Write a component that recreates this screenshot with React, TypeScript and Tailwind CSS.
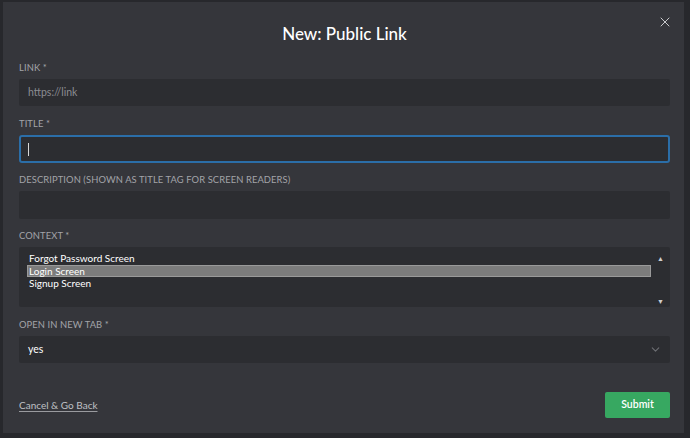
import { X, ChevronDown } from 'lucide-react';

const font = { fontFamily: 'Lato, "Open Sans", sans-serif' };

function Label({ children }: { children: React.ReactNode }) {
  return (
    <div className="text-[9.4px] leading-[12px] tracking-[0.01em] uppercase text-[#a3a4a9] mb-[5px]">
      {children}
    </div>
  );
}

export default function App() {
  const options = ['Forgot Password Screen', 'Login Screen', 'Signup Screen'];

  return (
    <div className="w-[690px] h-[438px] bg-[#27282c] overflow-hidden" style={font}>
      <div className="ml-[3px] mt-[2px] w-[681px] h-[431px] bg-[#35363b] relative pl-[16px] pr-[14px]">
        {/* header */}
        <div className="h-[60px] flex items-center justify-center pt-[4px]">
          <h2 className="text-[17px] text-white font-medium">New: Public Link</h2>
        </div>
        <button className="absolute right-[11px] top-[12px] text-[#c9cacd]">
          <X size={16} strokeWidth={1.5} />
        </button>

        {/* link */}
        <Label>Link *</Label>
        <div className="h-[27px] bg-[#2c2d31] rounded-[2px] flex items-center px-[9px] text-[10.5px] text-[#8b8c91]">
          https://link
        </div>

        {/* title */}
        <div className="mt-[12px]">
          <Label>Title *</Label>
          <div className="h-[28px] bg-[#2c2d31] rounded-[3px] border-2 border-[#2b6ea8] flex items-center px-[7px]">
            <span className="w-px h-[13px] bg-[#d8d8d8]" />
          </div>
        </div>

        {/* description */}
        <div className="mt-[11px]">
          <Label>Description (shown as title tag for screen readers)</Label>
          <div className="h-[28px] bg-[#2c2d31] rounded-[2px]" />
        </div>

        {/* context */}
        <div className="mt-[11px]">
          <Label>Context *</Label>
          <div className="h-[60px] bg-[#2c2d31] rounded-[2px] flex pl-[8px] pt-[5px]">
            <div className="flex-1 flex flex-col text-[10px] leading-[12.5px] text-white">
              {options.map((o) => (
                <div
                  key={o}
                  className={
                    o === 'Login Screen'
                      ? 'bg-[#7c7c7c] border border-[#9a9a9a] px-px leading-[10.5px]'
                      : 'px-[2px]'
                  }
                >
                  {o}
                </div>
              ))}
            </div>
            <div className="w-[19px] flex flex-col justify-between items-center py-[1px] text-[#cfcfcf] text-[7px]">
              <span>▲</span>
              <span>▼</span>
            </div>
          </div>
        </div>

        {/* open in new tab */}
        <div className="mt-[12px]">
          <Label>Open in new tab *</Label>
          <div className="h-[27px] bg-[#2c2d31] rounded-[2px] flex items-center justify-between pl-[9px] pr-[8px] text-[10.5px] text-white">
            <span>yes</span>
            <ChevronDown size={13} className="text-[#6d6e73]" />
          </div>
        </div>

        {/* footer */}
        <div className="mt-[29px] flex items-center justify-between">
          <a className="text-[10px] text-[#bfc0c4] underline underline-offset-2 decoration-[#9a9b9f]">
            Cancel &amp; Go Back
          </a>
          <button className="w-[65px] h-[26px] bg-[#37a861] rounded-[2px] text-white text-[10.5px] font-semibold">
            Submit
          </button>
        </div>
      </div>
    </div>
  );
}
